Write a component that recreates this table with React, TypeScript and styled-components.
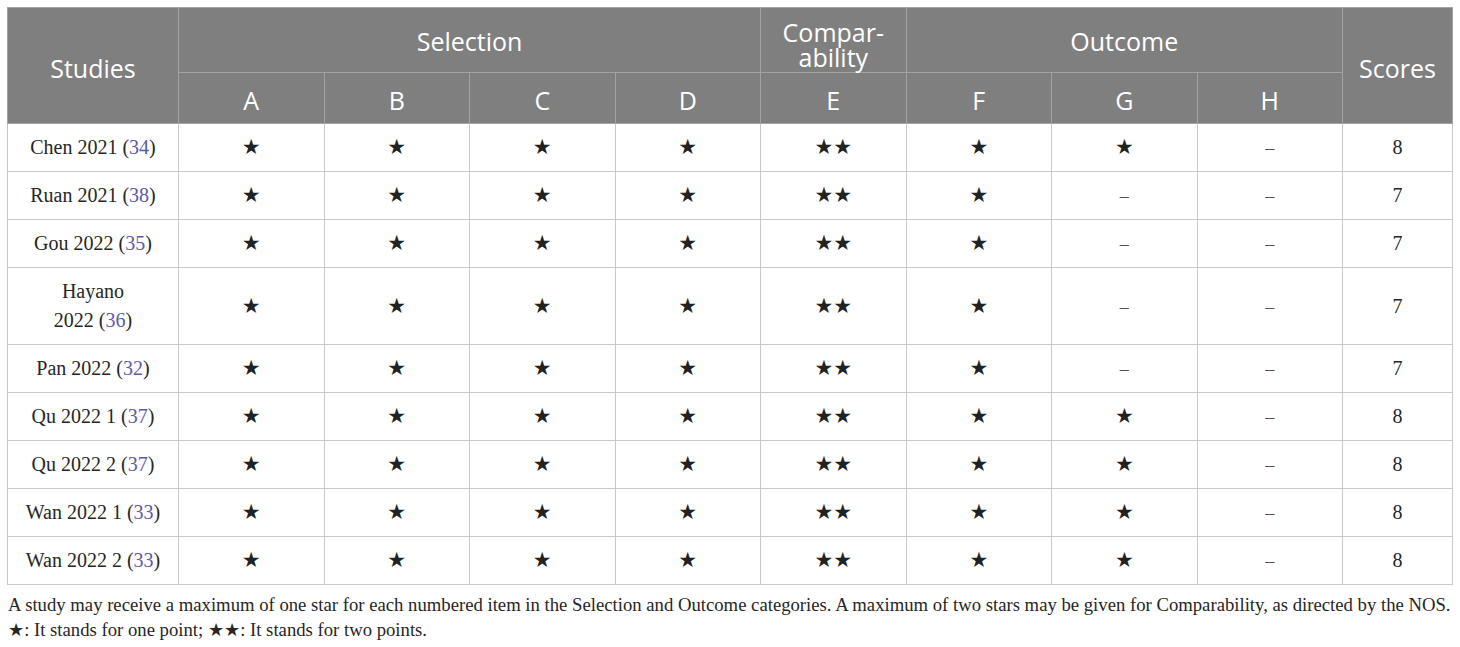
import React from "react";
import styled, { createGlobalStyle } from "styled-components";

const Global = createGlobalStyle`
  html, body { margin: 0; padding: 0; background: #ffffff; }
  body { font-family: "Liberation Serif", "Times New Roman", serif; }
`;

const Page = styled.div`
  padding: 7px 8px 0 7px;
  width: 1460px;
  box-sizing: border-box;
`;

const Table = styled.table`
  width: 1445px;
  table-layout: fixed;
  border-collapse: collapse;
  border: 1px solid #c9c9c9;
`;

const HeadCell = styled.th<{ $h?: number }>`
  background: #7f7f7f;
  color: #ffffff;
  font-family: "Open Sans", "Noto Sans", sans-serif;
  font-weight: 400;
  font-size: 25px;
  line-height: 25px;
  text-align: center;
  vertical-align: middle;
  border: 1px solid #a3a3a3;
  padding: 0;
  height: ${(p) => (p.$h ? `${p.$h}px` : "auto")};
`;

const HeadInner = styled.div<{ $pt?: number }>`
  padding-top: ${(p) => p.$pt ?? 0}px;
`;

const BodyCell = styled.td`
  font-family: "Liberation Serif", "Times New Roman", serif;
  font-size: 20px;
  line-height: 29px;
  height: 29px;
  color: #262626;
  text-align: center;
  vertical-align: middle;
  border: 1px solid #c9c9c9;
  padding: 9px 6px;
`;

const Ref = styled.span`
  color: #5d5aa8;
`;

const Star = styled.span`
  font-family: "DejaVu Sans", sans-serif;
  font-size: 21px;
  line-height: 1;
  color: #222222;
`;

const Dash = styled.span`
  color: #555555;
  font-size: 18px;
  line-height: 1;
`;

const Footer = styled.div`
  margin-top: 7px;
  font-family: "Liberation Serif", "Times New Roman", serif;
  font-size: 18.7px;
  line-height: 25px;
  color: #262626;
  padding-left: 1px;
  white-space: nowrap;
`;

const FootStar = styled.span`
  font-family: "DejaVu Sans", sans-serif;
  font-size: 18px;
  line-height: 1;
`;

type Row = {
  name: React.ReactNode;
  ref: string;
  g: boolean;
  score: number;
};

const rows: Row[] = [
  { name: "Chen 2021", ref: "34", g: true, score: 8 },
  { name: "Ruan 2021", ref: "38", g: false, score: 7 },
  { name: "Gou 2022", ref: "35", g: false, score: 7 },
  { name: <>Hayano<br />2022</>, ref: "36", g: false, score: 7 },
  { name: "Pan 2022", ref: "32", g: false, score: 7 },
  { name: "Qu 2022 1", ref: "37", g: true, score: 8 },
  { name: "Qu 2022 2", ref: "37", g: true, score: 8 },
  { name: "Wan 2022 1", ref: "33", g: true, score: 8 },
  { name: "Wan 2022 2", ref: "33", g: true, score: 8 },
];

const S = () => <Star>★</Star>;
const SS = () => <Star>★★</Star>;
const D = () => <Dash>–</Dash>;

export default function App() {
  return (
    <Page>
      <Global />
      <Table>
        <colgroup>
          <col style={{ width: 171 }} />
          {Array.from({ length: 8 }).map((_, i) => (
            <col key={i} style={{ width: 145.5 }} />
          ))}
          <col style={{ width: 110 }} />
        </colgroup>
        <thead>
          <tr>
            <HeadCell rowSpan={2}>
              <HeadInner $pt={6}>Studies</HeadInner>
            </HeadCell>
            <HeadCell colSpan={4} $h={64}>
              <HeadInner $pt={2}>Selection</HeadInner>
            </HeadCell>
            <HeadCell $h={64}>
              <HeadInner $pt={10}>
                Compar-
                <br />
                ability
              </HeadInner>
            </HeadCell>
            <HeadCell colSpan={3} $h={64}>
              <HeadInner $pt={2}>Outcome</HeadInner>
            </HeadCell>
            <HeadCell rowSpan={2}>
              <HeadInner $pt={6}>Scores</HeadInner>
            </HeadCell>
          </tr>
          <tr>
            {["A", "B", "C", "D", "E", "F", "G", "H"].map((l) => (
              <HeadCell key={l} $h={50}>
                <HeadInner $pt={4}>{l}</HeadInner>
              </HeadCell>
            ))}
          </tr>
        </thead>
        <tbody>
          {rows.map((r, i) => (
            <tr key={i}>
              <BodyCell>
                {r.name} (<Ref>{r.ref}</Ref>)
              </BodyCell>
              <BodyCell><S /></BodyCell>
              <BodyCell><S /></BodyCell>
              <BodyCell><S /></BodyCell>
              <BodyCell><S /></BodyCell>
              <BodyCell><SS /></BodyCell>
              <BodyCell><S /></BodyCell>
              <BodyCell>{r.g ? <S /> : <D />}</BodyCell>
              <BodyCell><D /></BodyCell>
              <BodyCell>{r.score}</BodyCell>
            </tr>
          ))}
        </tbody>
      </Table>
      <Footer>
        A study may receive a maximum of one star for each numbered item in the Selection and Outcome categories. A maximum of two stars may be given for Comparability, as directed by the NOS.
        <br />
        <FootStar>★</FootStar>: It stands for one point; <FootStar>★★</FootStar>: It stands for two points.
      </Footer>
    </Page>
  );
}
